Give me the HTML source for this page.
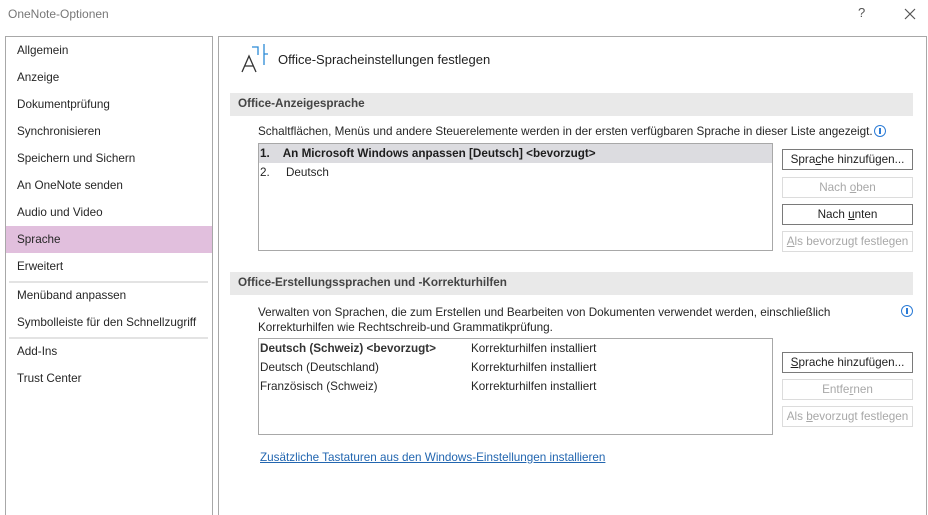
<!DOCTYPE html>
<html><head><meta charset="utf-8"><style>
*{margin:0;padding:0;box-sizing:border-box}
html,body{width:928px;height:515px;overflow:hidden}
body{background:#fff;font-family:"Liberation Sans",sans-serif;font-size:11.7px;color:#262626;position:relative}
.a{position:absolute;white-space:nowrap}
.nav{position:absolute;left:17px}
.btn{position:absolute;left:782px;width:131px;height:21px;border:1px solid #7a7a7a;text-align:center;line-height:19px;color:#1e1e1e;background:#fff}
.dis{border-color:#dcdcdc;color:#a8a8a8}
.hdr{position:absolute;left:230px;width:683px;height:23px;background:#e9e9e9;font-weight:bold;color:#444;padding-left:8px;line-height:22px}
.box{position:absolute;border:1px solid #a8a8a8}
.sep{position:absolute;left:9px;width:199px;height:2px;background:#e3e3e3}
.info{position:absolute;width:12px;height:12px;border:1.5px solid #2b7bd6;border-radius:50%;background:#fff}
.info:after{content:"";position:absolute;left:3.5px;top:1.5px;width:2px;height:6px;background:#2b7bd6}
</style></head><body>
<div class="a" style="left:8px;top:7px;color:#777;font-size:12px">OneNote-Optionen</div>
<div class="a" style="left:858px;top:5px;color:#555;font-size:13px">?</div>
<svg class="a" style="left:904px;top:8px" width="12" height="12"><path d="M1 1L11 11M11 1L1 11" stroke="#555" stroke-width="1.2"/></svg>

<div class="box" style="left:5px;top:36px;width:208px;height:490px"></div>
<div class="box" style="left:218px;top:36px;width:709px;height:490px"></div>

<div class="nav" style="top:44px">Allgemein</div>
<div class="nav" style="top:71px">Anzeige</div>
<div class="nav" style="top:98px">Dokumentprüfung</div>
<div class="nav" style="top:125px">Synchronisieren</div>
<div class="nav" style="top:152px">Speichern und Sichern</div>
<div class="nav" style="top:179px">An OneNote senden</div>
<div class="nav" style="top:206px">Audio und Video</div>
<div class="a" style="left:6px;top:226px;width:206px;height:27px;background:#e1bfdd"></div>
<div class="nav" style="top:233px">Sprache</div>
<div class="nav" style="top:260px">Erweitert</div>
<div class="sep" style="top:281px"></div>
<div class="nav" style="top:289px">Menüband anpassen</div>
<div class="nav" style="top:316px">Symbolleiste für den Schnellzugriff</div>
<div class="sep" style="top:337px"></div>
<div class="nav" style="top:345px">Add-Ins</div>
<div class="nav" style="top:372px">Trust Center</div>

<svg class="a" style="left:240px;top:43px" width="30" height="30"><path d="M2 29L9 13L16 29M5 23H13" stroke="#333" stroke-width="1.3" fill="none"/><path d="M12 4H18V12M24 1V22M24 11H28" stroke="#2b8ad6" stroke-width="1.3" fill="none"/></svg>
<div class="a" style="left:278px;top:52px;font-size:13px;color:#222">Office-Spracheinstellungen festlegen</div>

<div class="hdr" style="top:93px">Office-Anzeigesprache</div>
<div class="a" style="left:258px;top:125px">Schaltflächen, Menüs und andere Steuerelemente werden in der ersten verfügbaren Sprache in dieser Liste angezeigt.</div>
<div class="info" style="left:874px;top:125px"></div>
<div class="box" style="left:258px;top:143px;width:515px;height:108px"></div>
<div class="a" style="left:259px;top:144px;width:513px;height:19px;background:#dcdce0"></div>
<div class="a" style="left:260px;top:147px;font-weight:bold;color:#1e1e1e">1.&nbsp;&nbsp;&nbsp;&nbsp;An Microsoft Windows anpassen [Deutsch] &lt;bevorzugt&gt;</div>
<div class="a" style="left:260px;top:166px">2.&nbsp;&nbsp;&nbsp;&nbsp;&nbsp;Deutsch</div>
<div class="btn" style="top:149px">Spra<u>c</u>he hinzufügen...</div>
<div class="btn dis" style="top:177px">Nach <u>o</u>ben</div>
<div class="btn" style="top:204px">Nach <u>u</u>nten</div>
<div class="btn dis" style="top:231px"><u>A</u>ls bevorzugt festlegen</div>

<div class="hdr" style="top:272px">Office-Erstellungssprachen und -Korrekturhilfen</div>
<div class="a" style="left:258px;top:306px">Verwalten von Sprachen, die zum Erstellen und Bearbeiten von Dokumenten verwendet werden, einschließlich</div>
<div class="a" style="left:258px;top:321px">Korrekturhilfen wie Rechtschreib-und Grammatikprüfung.</div>
<div class="info" style="left:901px;top:305px"></div>
<div class="box" style="left:258px;top:338px;width:515px;height:97px"></div>
<div class="a" style="left:260px;top:342px;font-weight:bold;color:#333">Deutsch (Schweiz) &lt;bevorzugt&gt;</div>
<div class="a" style="left:471px;top:342px">Korrekturhilfen installiert</div>
<div class="a" style="left:260px;top:361px">Deutsch (Deutschland)</div>
<div class="a" style="left:471px;top:361px">Korrekturhilfen installiert</div>
<div class="a" style="left:260px;top:380px">Französisch (Schweiz)</div>
<div class="a" style="left:471px;top:380px">Korrekturhilfen installiert</div>
<div class="btn" style="top:352px"><u>S</u>prache hinzufügen...</div>
<div class="btn dis" style="top:379px">Entfe<u>r</u>nen</div>
<div class="btn dis" style="top:406px">Als <u>b</u>evorzugt festlegen</div>

<div class="a" style="left:260px;top:451px;color:#2266b0;text-decoration:underline">Zusätzliche Tastaturen aus den Windows-Einstellungen installieren</div>
</body></html>
